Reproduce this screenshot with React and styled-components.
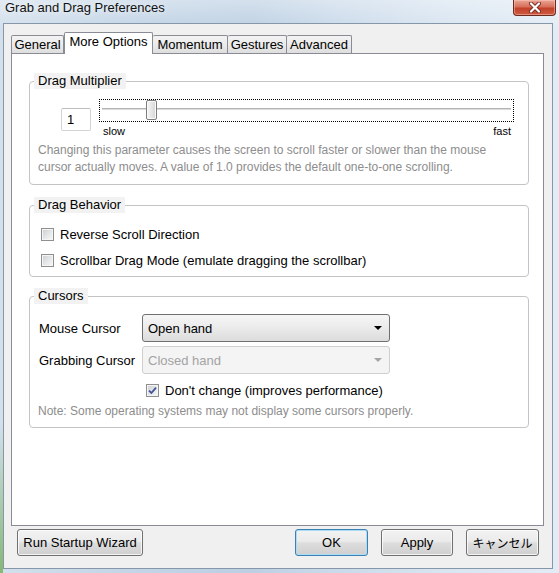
import React from 'react';
import styled, { createGlobalStyle } from 'styled-components';

const GlobalStyle = createGlobalStyle`
  html, body {
    margin: 0;
    padding: 0;
    overflow: hidden;
  }
  body {
    font-family: "Liberation Sans", Arial, "Noto Sans CJK JP", sans-serif;
    color: #000;
  }
`;

const Window = styled.div`
  width: 559px;
  height: 573px;
  box-sizing: border-box;
  display: flex;
  flex-direction: column;
  padding: 0 6px 4px 3px;
  background:
    linear-gradient(to top, #86b874, rgba(134, 184, 116, 0) 150px) left bottom / 3px 100% no-repeat,
    linear-gradient(180deg, rgba(255, 255, 255, 0.35), rgba(255, 255, 255, 0) 30px),
    linear-gradient(90deg, #d3e0ec 0%, #c2d4e6 25%, #bdd0e3 45%, #cadaea 60%, #d9e5f1 80%, #e3ecf5 100%);
`;

const TitleBar = styled.div`
  height: 23px;
  display: flex;
  justify-content: space-between;
  align-items: flex-start;
  padding-left: 2px;
`;

const Title = styled.span`
  font-size: 13px;
  line-height: 16px;
  color: #111;
  text-shadow: 0 0 6px rgba(255, 255, 255, 0.9);
`;

const CloseButton = styled.div`
  width: 43px;
  height: 16px;
  margin-right: -3px;
  box-sizing: border-box;
  border: 1px solid #6b2b20;
  border-top: none;
  border-radius: 0 0 4px 4px;
  background: linear-gradient(180deg, #e9a594 0%, #d7705a 45%, #c2412b 55%, #cf5c41 100%);
  box-shadow: inset 0 0 0 1px rgba(255, 210, 200, 0.45);
  display: flex;
  align-items: center;
  justify-content: center;
`;

const Client = styled.div`
  flex: 1;
  display: flex;
  flex-direction: column;
  border: 1px solid #8797aa;
  background: #f0f0f0;
  padding: 8px 8px 12px 7px;
`;

const TabStrip = styled.div`
  display: flex;
  align-items: flex-end;
  height: 22px;
  margin-bottom: -1px;
  position: relative;
  z-index: 1;
`;

const Tab = styled.div`
  width: ${(p) => p.$width}px;
  box-sizing: border-box;
  height: ${(p) => (p.$active ? 22 : 18)}px;
  margin-bottom: ${(p) => (p.$active ? 0 : 1)}px;
  border: 1px solid #898c95;
  border-bottom: none;
  border-left-width: ${(p) => (p.$first || p.$active ? 1 : 0)}px;
  border-radius: 2px 2px 0 0;
  background: ${(p) =>
    p.$active ? '#fff' : 'linear-gradient(180deg, #f3f3f3 0%, #ebebeb 50%, #dedede 100%)'};
  font-size: 13px;
  line-height: ${(p) => (p.$active ? 18 : 17)}px;
  text-align: center;
  white-space: nowrap;
`;

const Panel = styled.div`
  flex: 1;
  border: 1px solid #898c95;
  background: #fff;
  padding: 0 14px 0 17px;
`;

const Group = styled.fieldset`
  margin: ${(p) => p.$top}px 0 0;
  padding: 0;
  border: 1px solid #c4c4c4;
  border-radius: 4px;
  min-width: 0;
`;

const Legend = styled.legend`
  margin-left: 4px;
  padding: 0 4px;
  font-size: 13px;
  line-height: 16px;
  background: #f2f2f2;
`;

const MultiplierRow = styled.div`
  display: flex;
  align-items: center;
  gap: 8px;
  margin-top: 10px;
  padding-left: 31px;
`;

const NumberBox = styled.div`
  width: 30px;
  height: 23px;
  box-sizing: border-box;
  border: 1px solid #d3d3d3;
  border-top-color: #bdbdbd;
  border-radius: 2px;
  padding-left: 5px;
  font-size: 13px;
  line-height: 21px;
`;

const SliderColumn = styled.div`
  display: flex;
  flex-direction: column;
`;

const Slider = styled.div`
  width: 415px;
  height: 23px;
  box-sizing: border-box;
  border: 1px dotted #000;
  position: relative;
`;

const Track = styled.div`
  position: absolute;
  left: 2px;
  right: 2px;
  top: 8px;
  height: 3px;
  box-sizing: border-box;
  border-top: 1px solid #b4b4b4;
  border-bottom: 1px solid #fdfdfd;
  background: #dcdcdc;
`;

const Thumb = styled.div`
  position: absolute;
  top: 0;
  width: 11px;
  height: 20px;
  box-sizing: border-box;
  border: 1px solid #7d7d7d;
  border-radius: 2px;
  background: linear-gradient(90deg, #f7f7f7 0%, #e6e6e6 50%, #d6d6d6 100%);
  box-shadow: inset 0 0 0 1px #fbfbfb;
`;

const SliderLabels = styled.div`
  display: flex;
  justify-content: space-between;
  margin-top: 2px;
  padding: 0 3px 0 4px;
  font-size: 11px;
  line-height: 15px;
`;

const Hint = styled.div`
  margin-top: ${(p) => p.$top}px;
  padding: 0 8px ${(p) => p.$bottom}px;
  font-size: 12px;
  line-height: ${(p) => p.$line}px;
  color: #8d8d8d;
  white-space: nowrap;
`;

const CheckList = styled.div`
  padding: 8px 0 3px 11px;
`;

const CheckRow = styled.label`
  display: flex;
  align-items: center;
  gap: 6px;
  height: ${(p) => p.$height || 26}px;
  font-size: 13px;
`;

const Box = styled.span`
  width: 13px;
  height: 13px;
  box-sizing: border-box;
  flex: none;
  border: 1px solid #8e8f8f;
  background: linear-gradient(135deg, #c9cdd2 0%, #e6e7e8 55%, #f7f7f7 100%);
  box-shadow: inset 0 0 0 1px #f5f5f5;
  display: flex;
  align-items: center;
  justify-content: center;
`;

const CursorGrid = styled.div`
  display: grid;
  grid-template-columns: 103px 248px;
  row-gap: 4px;
  margin-top: 10px;
  padding-left: 9px;
  align-items: center;
`;

const FieldLabel = styled.div`
  font-size: 13px;
`;

const Combo = styled.div`
  height: 28px;
  box-sizing: border-box;
  display: flex;
  align-items: center;
  justify-content: space-between;
  padding: 0 7px 0 5px;
  border: 1px solid ${(p) => (p.$disabled ? '#cfcfcf' : '#707070')};
  border-radius: 3px;
  background: ${(p) =>
    p.$disabled ? '#f4f4f4' : 'linear-gradient(180deg, #f6f6f6 0%, #ececec 45%, #dcdcdc 100%)'};
  color: ${(p) => (p.$disabled ? '#a3a3a3' : '#000')};
  font-size: 13px;
`;

const Arrow = styled.span`
  width: 0;
  height: 0;
  border-left: 4px solid transparent;
  border-right: 4px solid transparent;
  border-top: 4px solid ${(p) => (p.$disabled ? '#a5a5a5' : '#000')};
`;

const DontChange = styled.div`
  grid-column: 2;
  padding-left: 4px;
`;

const ButtonRow = styled.div`
  display: flex;
  align-items: center;
  margin-top: 3px;
  padding: 0 5px 0 6px;
  gap: 13px;
`;

const Spacer = styled.div`
  flex: 1;
`;

const Button = styled.div`
  width: ${(p) => p.$width}px;
  height: 27px;
  box-sizing: border-box;
  border: 1px solid ${(p) => (p.$default ? '#3c7fb1' : '#707070')};
  border-radius: 3px;
  background: linear-gradient(180deg, #f2f2f2 0%, #ebebeb 45%, #dddddd 52%, #cfcfcf 100%);
  box-shadow: inset 0 0 0 1px ${(p) => (p.$default ? '#a9dcf6' : 'rgba(255, 255, 255, 0.75)')};
  display: flex;
  align-items: center;
  justify-content: center;
  font-size: ${(p) => p.$size || 13}px;
  white-space: nowrap;
`;

const CheckMark = () => (
  <svg width="9" height="9" viewBox="0 0 9 9">
    <path d="M1 4.6 L3.4 7 L8 1.6" fill="none" stroke="#3f5598" strokeWidth="1.8" />
  </svg>
);

const CloseGlyph = () => (
  <svg width="14" height="11" viewBox="0 0 14 11">
    <path d="M3 1.5 L11 9.5 M11 1.5 L3 9.5" stroke="#7a2d22" strokeWidth="4" strokeLinecap="round" />
    <path d="M3 1.5 L11 9.5 M11 1.5 L3 9.5" stroke="#fff" strokeWidth="2.2" strokeLinecap="round" />
  </svg>
);

const tabs = [
  { label: 'General', width: 53 },
  { label: 'More Options', width: 89, active: true },
  { label: 'Momentum', width: 75 },
  { label: 'Gestures', width: 59 },
  { label: 'Advanced', width: 65 },
];

// drag multiplier as a fraction of the slider track
const multiplier = 0.115;

const App = () => (
  <>
    <GlobalStyle />
    <Window>
      <TitleBar>
        <Title>Grab and Drag Preferences</Title>
        <CloseButton>
          <CloseGlyph />
        </CloseButton>
      </TitleBar>
      <Client>
        <TabStrip>
          {tabs.map((t, i) => (
            <Tab key={t.label} $width={t.width} $active={t.active} $first={i === 0}>
              {t.label}
            </Tab>
          ))}
        </TabStrip>
        <Panel>
          {/* drag multiplier */}
          <Group $top={19}>
            <Legend>Drag Multiplier</Legend>
            <MultiplierRow>
              <NumberBox>1</NumberBox>
              <SliderColumn>
                <Slider>
                  <Track />
                  <Thumb style={{ left: Math.round(multiplier * 400) }} />
                </Slider>
                <SliderLabels>
                  <span>slow</span>
                  <span>fast</span>
                </SliderLabels>
              </SliderColumn>
            </MultiplierRow>
            <Hint $top={3} $bottom={8} $line={17}>
              Changing this parameter causes the screen to scroll faster or slower than the mouse
              <br />
              cursor actually moves. A value of 1.0 provides the default one-to-one scrolling.
            </Hint>
          </Group>

          {/* drag behavior */}
          <Group $top={12}>
            <Legend>Drag Behavior</Legend>
            <CheckList>
              <CheckRow>
                <Box />
                Reverse Scroll Direction
              </CheckRow>
              <CheckRow>
                <Box />
                Scrollbar Drag Mode (emulate dragging the scrollbar)
              </CheckRow>
            </CheckList>
          </Group>

          {/* cursors */}
          <Group $top={11}>
            <Legend>Cursors</Legend>
            <CursorGrid>
              <FieldLabel>Mouse Cursor</FieldLabel>
              <Combo>
                Open hand
                <Arrow />
              </Combo>
              <FieldLabel>Grabbing Cursor</FieldLabel>
              <Combo $disabled>
                Closed hand
                <Arrow $disabled />
              </Combo>
              <DontChange>
                <CheckRow $height={24}>
                  <Box>
                    <CheckMark />
                  </Box>
                  Don't change (improves performance)
                </CheckRow>
              </DontChange>
            </CursorGrid>
            <Hint $top={1} $bottom={8} $line={16}>
              Note: Some operating systems may not display some cursors properly.
            </Hint>
          </Group>
        </Panel>
        <ButtonRow>
          <Button $width={126}>Run Startup Wizard</Button>
          <Spacer />
          <Button $width={73} $default>
            OK
          </Button>
          <Button $width={72}>Apply</Button>
          <Button $width={73} $size={12}>
            キャンセル
          </Button>
        </ButtonRow>
      </Client>
    </Window>
  </>
);

export default App;
